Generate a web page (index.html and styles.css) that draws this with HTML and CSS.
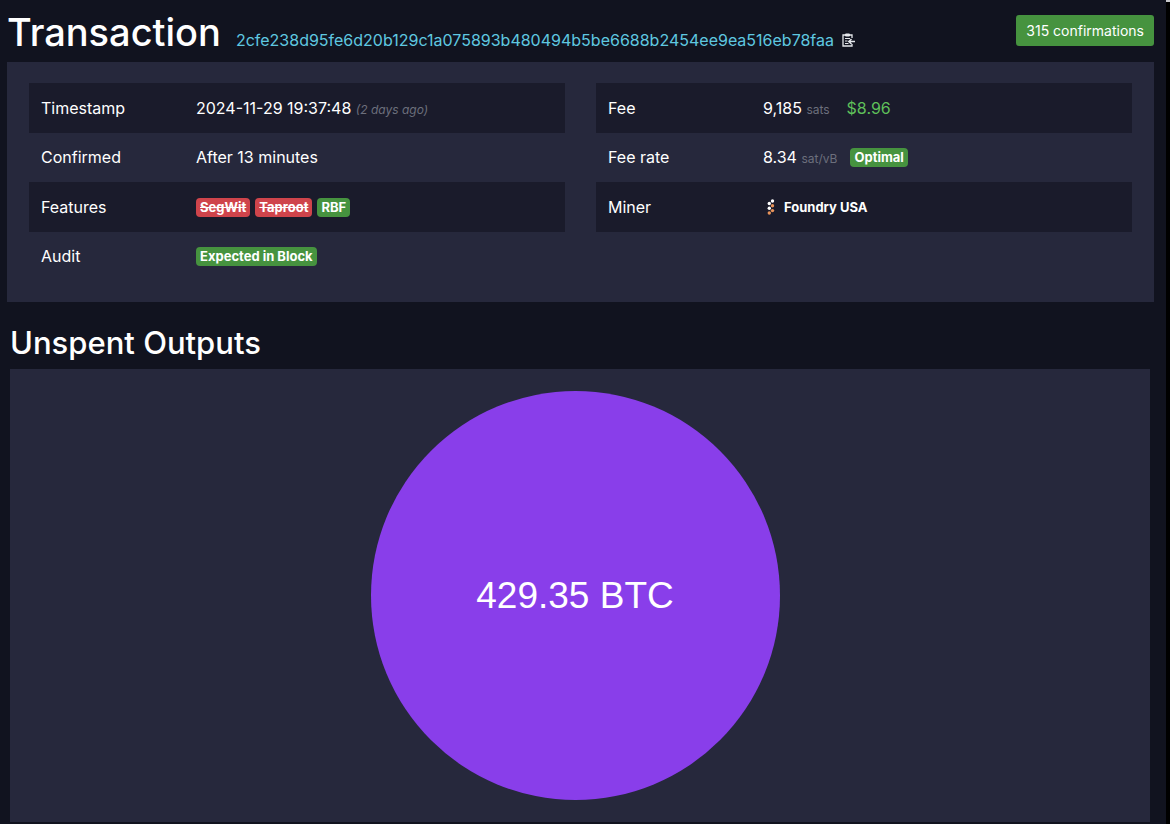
FILE: index.html
```html
<!DOCTYPE html>
<html lang="en">
<head>
    <meta charset="UTF-8">
    <meta name="viewport" content="width=device-width, initial-scale=1.0">
    <title>Transaction</title>
    <link rel="stylesheet" href="styles.css">
</head>
<body>
    <div class="page">
        <header class="title-bar">
            <h1>Transaction</h1>
            <div class="tx-link">
                <a href="#">2cfe238d95fe6d20b129c1a075893b480494b5be6688b2454ee9ea516eb78faa</a>
                <button type="button" class="copy-btn" aria-label="Copy transaction id">
                    <svg width="13" height="14" viewBox="0 0 13 14" fill="none" stroke="#e4e6ea">
                        <path d="M10 5V2H1V13H10V11" stroke-width="1.300"/>
                        <path d="M3.500 3H7.500V1H3.500Z" fill="#e4e6ea"/>
                        <path d="M3 5.500H8M3 8H5.500M3 10.500H6.500" stroke-width="1"/>
                        <path d="M13 8.500H7M9.500 6L6.800 8.500L9.500 11" stroke-width="1.500"/>
                    </svg>
                </button>
            </div>
            <button type="button" class="confirmations">315 confirmations</button>
        </header>

        <section class="box details">
            <table>
                <tr>
                    <th scope="row">Timestamp</th>
                    <td>2024-11-29 19:37:48 <i class="unit">(2 days ago)</i></td>
                </tr>
                <tr>
                    <th scope="row">Confirmed</th>
                    <td>After 13 minutes</td>
                </tr>
                <tr>
                    <th scope="row">Features</th>
                    <td>
                        <div class="badges">
                            <span class="badge red"><s>SegWit</s></span>
                            <span class="badge red"><s>Taproot</s></span>
                            <span class="badge">RBF</span>
                        </div>
                    </td>
                </tr>
                <tr>
                    <th scope="row">Audit</th>
                    <td><div class="badges"><span class="badge">Expected in Block</span></div></td>
                </tr>
            </table>
            <table>
                <tr>
                    <th scope="row">Fee</th>
                    <td>9,185 <span class="unit">sats</span><span class="fiat">$8.96</span></td>
                </tr>
                <tr>
                    <th scope="row">Fee rate</th>
                    <td>
                        <div class="badges">
                            <span>8.34 <span class="unit">sat/vB</span></span>
                            <span class="badge rating">Optimal</span>
                        </div>
                    </td>
                </tr>
                <tr>
                    <th scope="row">Miner</th>
                    <td>
                        <a href="#" class="miner">
                            <svg width="16" height="16" viewBox="0 0 16 16">
                                <g fill="#ffffff">
                                    <circle cx="9.500" cy="2" r="1.700"/>
                                    <circle cx="6.300" cy="4.500" r="1.700"/>
                                    <circle cx="6.300" cy="9.200" r="1.700"/>
                                </g>
                                <g fill="#e8935a">
                                    <circle cx="9.500" cy="6.800" r="1.700"/>
                                    <circle cx="9.500" cy="11.600" r="1.700"/>
                                    <circle cx="6.300" cy="14" r="1.700"/>
                                </g>
                            </svg>
                            Foundry USA
                        </a>
                    </td>
                </tr>
            </table>
        </section>

        <section class="outputs">
            <h2>Unspent Outputs</h2>
            <div class="box chart">
                <div class="bubble">429.35 BTC</div>
            </div>
        </section>
        <div class="scroll-corner"></div>
    </div>
</body>
</html>
```

FILE: styles.css
```css
* {
    box-sizing: border-box;
}
body {
    margin: 0;
    background-color: #11131f;
    color: #ffffff;
    font-family: Inter, "Liberation Sans", sans-serif;
    font-size: 16px;
}
a {
    color: #5fc8e0;
    text-decoration: none;
}
button {
    border: 0;
    padding: 0;
    font: inherit;
    color: inherit;
    background: none;
    cursor: pointer;
}
.page {
    position: relative;
    min-height: 100vh;
    padding: 8px 12px 2px 7px;
    border-right: 4px solid #000000;
}
/* Light corner above the scroll track */
.scroll-corner {
    position: absolute;
    top: 0;
    right: -4px;
    width: 4px;
    height: 2px;
    background-color: #c8c8cc;
}
.title-bar {
    display: flex;
    align-items: baseline;
    padding-bottom: 6px;
}
h1 {
    margin: 0;
    font-size: 38px;
    font-weight: 500;
    line-height: 48px;
}
.tx-link {
    display: flex;
    align-items: center;
    gap: 8px;
    margin-left: 15px;
    line-height: 24px;
}
.copy-btn {
    display: flex;
}
.confirmations {
    align-self: flex-start;
    margin: 7px 0 0 auto;
    padding: 0 10px;
    border-radius: 3px;
    background-color: #46933f;
    font-size: 14px;
    line-height: 31px;
}
.box {
    background-color: #26283c;
}
.details {
    display: grid;
    grid-template-columns: 1fr 1fr;
    align-items: start;
    gap: 31px;
    padding: 21px 22px;
}
table {
    width: 100%;
    border-collapse: collapse;
    table-layout: fixed;
}
tr {
    line-height: 25px;
}
tr:nth-child(odd) {
    background-color: #1a1b2b;
    line-height: 26px;
}
th, td {
    padding: 12px 0 12px 12px;
    text-align: left;
    font-weight: 400;
}
th {
    width: 155px;
}
.unit {
    color: #6c6f7c;
    font-size: 12px;
    line-height: 1;
}
.fiat {
    margin-left: 17px;
    color: #5fc05a;
}
.badges {
    display: flex;
    align-items: center;
    gap: 5px;
}
.badge {
    padding: 0 4px;
    border-radius: 4px;
    background-color: #46933f;
    font-size: 13px;
    font-weight: 700;
    line-height: 19px;
}
.badge.red {
    background-color: #cf444b;
}
.rating {
    margin-left: 8px;
}
.miner {
    display: flex;
    align-items: center;
    gap: 5px;
    color: #ffffff;
    font-size: 13px;
    font-weight: 700;
}
.outputs {
    padding: 21px 4px 0 3px;
}
h2 {
    margin: 0 0 6px;
    font-size: 31px;
    font-weight: 500;
    line-height: 40px;
}
.chart {
    display: flex;
    justify-content: center;
    padding: 22px 10px 22px 0;
}
.bubble {
    display: flex;
    align-items: center;
    justify-content: center;
    width: 409px;
    aspect-ratio: 1;
    border-radius: 50%;
    background-color: #893eea;
    font-family: "Liberation Sans", sans-serif;
    font-size: 37px;
}
```
